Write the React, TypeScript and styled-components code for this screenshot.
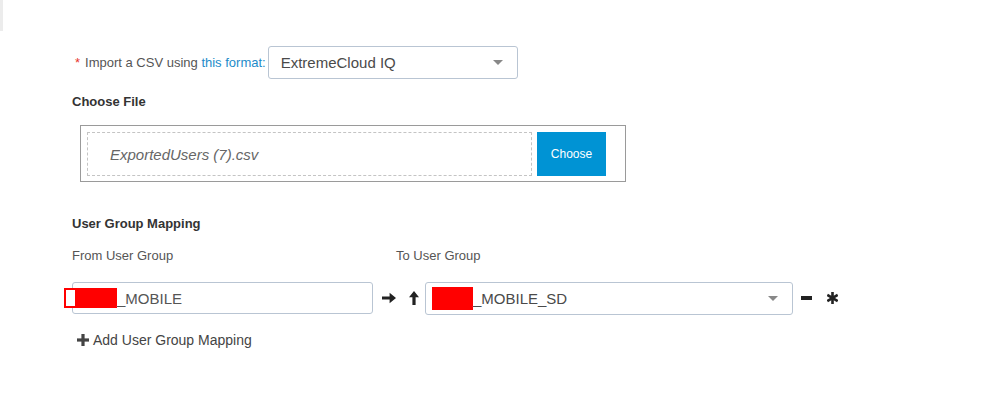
import React from 'react';
import styled, { createGlobalStyle } from 'styled-components';

const GlobalStyle = createGlobalStyle`
  body {
    margin: 0;
    background: #ffffff;
    font-family: "Liberation Sans", Arial, sans-serif;
    color: #555555;
  }
`;

const Page = styled.div`
  display: flex;
  width: 999px;
  height: 396px;
  overflow: hidden;
`;

const Gutter = styled.div`
  width: 3px;
  height: 31px;
  background: #ececec;
  flex: none;
`;

const Content = styled.div`
  padding: 46px 0 0 69px;
  display: flex;
  flex-direction: column;
  align-items: flex-start;
`;

const ImportRow = styled.div`
  display: flex;
  align-items: center;
  height: 33px;
`;

const Required = styled.span`
  color: #e8352b;
  font-size: 13px;
  margin: 0 5px 0 3px;
`;

const Hint = styled.span`
  font-size: 13px;
  color: #555555;
  margin-right: 2px;
`;

const Link = styled.a`
  color: #1d8bc9;
  text-decoration: none;
`;

const Select = styled.div<{ $width: number; $pad: number }>`
  box-sizing: border-box;
  width: ${(p) => p.$width}px;
  height: 33px;
  border: 1px solid #b9c5d3;
  border-radius: 3px;
  display: flex;
  align-items: center;
  padding: 0 14px 0 ${(p) => p.$pad}px;
  font-size: 15px;
  color: #4a4a4a;
`;

const SelectText = styled.span`
  flex: 1;
  display: flex;
  align-items: center;
`;

const Caret = styled.span`
  width: 0;
  height: 0;
  border-left: 5px solid transparent;
  border-right: 5px solid transparent;
  border-top: 5px solid #888888;
`;

const Heading = styled.div<{ $top: number }>`
  margin-top: ${(p) => p.$top}px;
  font-size: 13px;
  font-weight: bold;
  color: #333333;
  line-height: 16px;
`;

const FileBox = styled.div`
  box-sizing: border-box;
  margin: 15px 0 0 8px;
  width: 546px;
  height: 57px;
  border: 1px solid #9a9a9a;
  padding: 6px;
  display: flex;
  gap: 5px;
`;

const DropZone = styled.div`
  box-sizing: border-box;
  width: 445px;
  height: 44px;
  border: 1px dashed #c4c4c4;
  display: flex;
  align-items: center;
  padding-left: 22px;
  font-size: 15px;
  font-style: italic;
  color: #666666;
`;

const ChooseButton = styled.button`
  width: 69px;
  height: 44px;
  border: none;
  background: #0093d4;
  color: #ffffff;
  font-family: "Liberation Sans", Arial, sans-serif;
  font-size: 12px;
  padding: 0;
`;

const LabelRow = styled.div`
  display: flex;
  margin-top: 16px;
  font-size: 13px;
  line-height: 16px;
  color: #555555;
`;

const Label = styled.span<{ $width?: number }>`
  width: ${(p) => (p.$width ? `${p.$width}px` : 'auto')};
`;

const MappingRow = styled.div`
  display: flex;
  align-items: center;
  margin-top: 18px;
  height: 32px;
`;

const Input = styled.div`
  box-sizing: border-box;
  width: 301px;
  height: 32px;
  border: 1px solid #b9c5d3;
  border-radius: 3px;
  display: flex;
  align-items: center;
  font-size: 15px;
  color: #555555;
`;

const Redaction = styled.span<{ $outlined?: boolean; $w: number; $h: number }>`
  box-sizing: border-box;
  display: inline-block;
  width: ${(p) => p.$w}px;
  height: ${(p) => p.$h}px;
  background: ${(p) =>
    p.$outlined ? 'linear-gradient(to right, #ffffff 0 9px, #ff0000 9px)' : '#ff0000'};
  border: ${(p) => (p.$outlined ? '2px solid #ff0000' : 'none')};
  margin-left: ${(p) => (p.$outlined ? -9 : 0)}px;
`;

const IconSlot = styled.span<{ $left: number; $right: number }>`
  display: flex;
  align-items: center;
  color: #222222;
  margin: 0 ${(p) => p.$right}px 0 ${(p) => p.$left}px;
`;

const AddLink = styled.div`
  display: flex;
  align-items: center;
  gap: 4px;
  margin: 18px 0 0 5px;
  font-size: 14px;
  line-height: 16px;
  color: #444444;
`;

const ArrowRight = () => (
  <svg width="14" height="12" viewBox="0 0 14 12" fill="currentColor">
    <path d="M0 4.4h7.6V0.8L14 6l-6.4 5.2V7.6H0z" />
  </svg>
);

const ArrowUp = () => (
  <svg width="10" height="14" viewBox="0 0 10 14" fill="currentColor">
    <path d="M5 0l5 6.2H6.6V14H3.4V6.2H0z" />
  </svg>
);

const Minus = () => (
  <svg width="11" height="4" viewBox="0 0 11 4" fill="currentColor">
    <rect x="0" y="0" width="11" height="4" />
  </svg>
);

const Asterisk = () => (
  <svg width="11" height="12" viewBox="0 0 11 12" stroke="currentColor" strokeWidth="2.6">
    <line x1="5.5" y1="0" x2="5.5" y2="12" />
    <line x1="0.3" y1="3" x2="10.7" y2="9" />
    <line x1="0.3" y1="9" x2="10.7" y2="3" />
    <circle cx="5.5" cy="6" r="2.4" fill="currentColor" stroke="none" />
  </svg>
);

const Plus = () => (
  <svg width="12" height="12" viewBox="0 0 12 12" fill="currentColor">
    <rect x="4.4" y="0" width="3.2" height="12" />
    <rect x="0" y="4.4" width="12" height="3.2" />
  </svg>
);

export default function App() {
  return (
    <Page>
      <GlobalStyle />
      <Gutter />
      <Content>
        <ImportRow>
          <Required>*</Required>
          <Hint>
            Import a CSV using <Link>this format:</Link>
          </Hint>
          <Select $width={250} $pad={12}>
            <SelectText>ExtremeCloud IQ</SelectText>
            <Caret />
          </Select>
        </ImportRow>

        <Heading $top={15}>Choose File</Heading>
        <FileBox>
          <DropZone>ExportedUsers (7).csv</DropZone>
          <ChooseButton>Choose</ChooseButton>
        </FileBox>

        <Heading $top={34}>User Group Mapping</Heading>
        <LabelRow>
          <Label $width={324}>From User Group</Label>
          <Label>To User Group</Label>
        </LabelRow>

        <MappingRow>
          <Input>
            <Redaction $outlined $w={53} $h={20} />
            <span>_MOBILE</span>
          </Input>
          <IconSlot $left={9} $right={13}>
            <ArrowRight />
          </IconSlot>
          <IconSlot $left={0} $right={6}>
            <ArrowUp />
          </IconSlot>
          <Select $width={368} $pad={6}>
            <SelectText>
              <Redaction $w={41} $h={23} />
              <span>_MOBILE_SD</span>
            </SelectText>
            <Caret />
          </Select>
          <IconSlot $left={8} $right={15}>
            <Minus />
          </IconSlot>
          <IconSlot $left={0} $right={0}>
            <Asterisk />
          </IconSlot>
        </MappingRow>

        <AddLink>
          <Plus />
          <span>Add User Group Mapping</span>
        </AddLink>
      </Content>
    </Page>
  );
}
